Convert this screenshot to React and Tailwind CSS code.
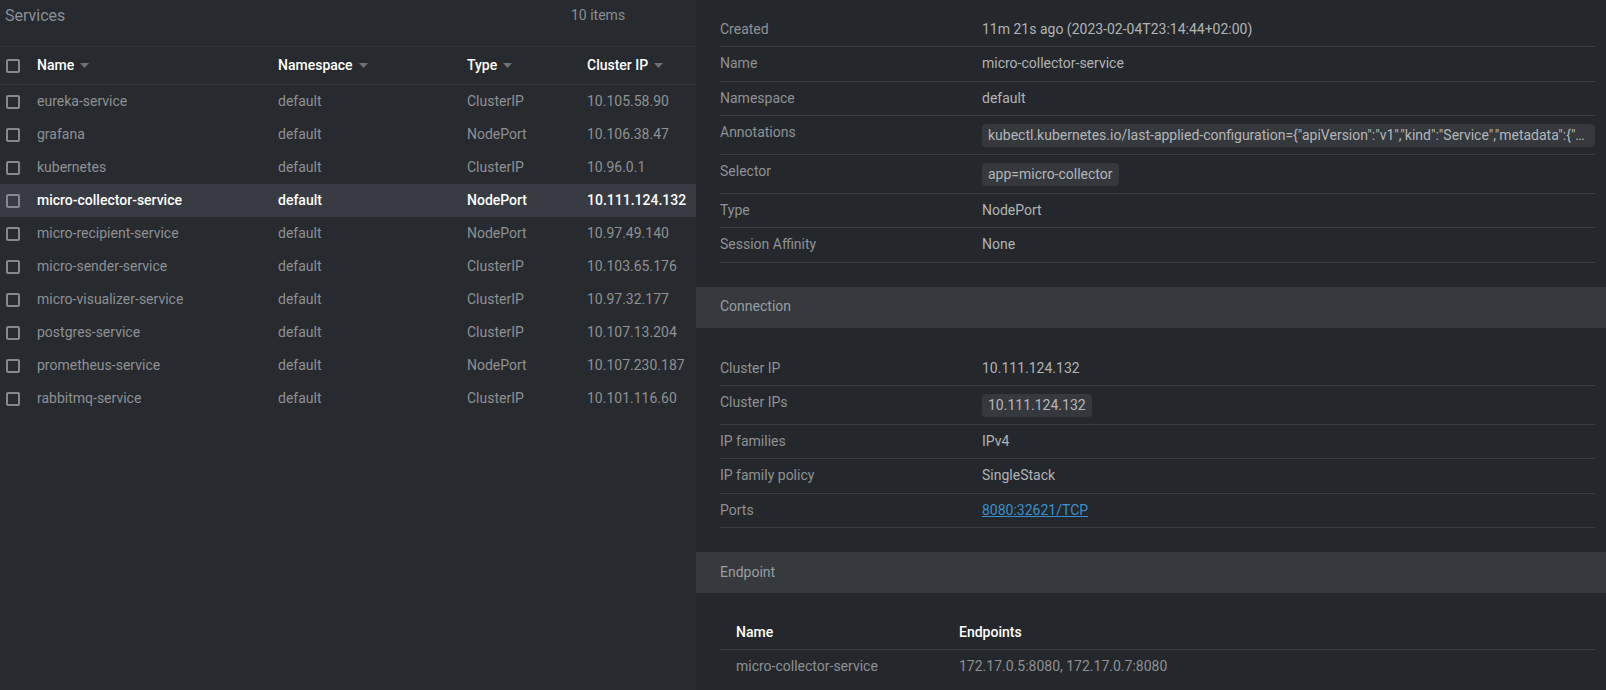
import React from "react";

const services = [
  { name: "eureka-service", ns: "default", type: "ClusterIP", ip: "10.105.58.90" },
  { name: "grafana", ns: "default", type: "NodePort", ip: "10.106.38.47" },
  { name: "kubernetes", ns: "default", type: "ClusterIP", ip: "10.96.0.1" },
  { name: "micro-collector-service", ns: "default", type: "NodePort", ip: "10.111.124.132", selected: true },
  { name: "micro-recipient-service", ns: "default", type: "NodePort", ip: "10.97.49.140" },
  { name: "micro-sender-service", ns: "default", type: "ClusterIP", ip: "10.103.65.176" },
  { name: "micro-visualizer-service", ns: "default", type: "ClusterIP", ip: "10.97.32.177" },
  { name: "postgres-service", ns: "default", type: "ClusterIP", ip: "10.107.13.204" },
  { name: "prometheus-service", ns: "default", type: "NodePort", ip: "10.107.230.187" },
  { name: "rabbitmq-service", ns: "default", type: "ClusterIP", ip: "10.101.116.60" },
];

const cols = "grid grid-cols-[37px_241px_189px_120px_109px] items-center";

function Checkbox() {
  return <span className="block w-[14px] h-[14px] ml-[6px] border-2 border-[#85888c] rounded-[2px]" />;
}

function SortArrow() {
  return (
    <svg width="9" height="5" viewBox="0 0 9 5" className="ml-[6px] mt-[1px]">
      <path d="M0 0 L9 0 L4.5 5 Z" fill="#6c7075" />
    </svg>
  );
}

function HeadCell({ children }) {
  return (
    <div className="flex items-center text-white font-medium">
      {children}
      <SortArrow />
    </div>
  );
}

function DetailRow({ label, children, badge }) {
  return (
    <div
      className={`grid grid-cols-[262px_1fr] border-b border-[#393c41] ${
        badge ? "pt-[8px] pb-[7px]" : "py-[8px]"
      }`}
    >
      <div className="text-[#8f9296]">{label}</div>
      <div className="text-[#b1b4b7] min-w-0 flex items-start">{children}</div>
    </div>
  );
}

function Badge({ children, full }) {
  return (
    <span
      className={`${full ? "flex-1 min-w-0" : ""} block h-[23px] leading-[17px] bg-[#35383d] rounded-[4px] px-[6px] py-[3px] text-[#b4b7ba] truncate`}
    >
      {children}
    </span>
  );
}

function SectionHeader({ children }) {
  return (
    <div className="h-[41px] bg-[#36393e] flex items-center px-[24px] text-[#9a9da1]">{children}</div>
  );
}

export default function App() {
  return (
    <div
      className="flex w-[1606px] h-[690px] overflow-hidden text-[14px] leading-[17.33px]"
      style={{ fontFamily: "Roboto, 'Liberation Sans', sans-serif" }}
    >
      {/* services list */}
      <div className="w-[696px] shrink-0 bg-[#272a2e]">
        <div className="h-[47px] border-b border-[#313439] flex items-start pt-[6px]">
          <div className="w-[571px] pl-[5px] text-[16px] leading-[19px] text-[#8a9099]">Services</div>
          <div className="text-[#8a9099] text-[14px] leading-[19px]">10 items</div>
        </div>
        <div className={`${cols} h-[38px] border-b border-[#35383c]`}>
          <Checkbox />
          <HeadCell>Name</HeadCell>
          <HeadCell>Namespace</HeadCell>
          <HeadCell>Type</HeadCell>
          <HeadCell>Cluster IP</HeadCell>
        </div>
        {services.map((s) => (
          <div
            key={s.name}
            className={`${cols} h-[33px] ${
              s.selected ? "bg-[#383b41] text-white font-medium" : "text-[#8e9195]"
            }`}
          >
            <Checkbox />
            <div>{s.name}</div>
            <div>{s.ns}</div>
            <div>{s.type}</div>
            <div>{s.ip}</div>
          </div>
        ))}
      </div>

      {/* details */}
      <div className="flex-1 bg-[#24272b] pt-[13px]">
        <div className="pl-[24px] pr-[11px]">
          <DetailRow label="Created">11m 21s ago (2023-02-04T23:14:44+02:00)</DetailRow>
          <DetailRow label="Name">micro-collector-service</DetailRow>
          <DetailRow label="Namespace">default</DetailRow>
          <DetailRow label="Annotations" badge>
            <Badge full>
              kubectl.kubernetes.io/last-applied-configuration={"{"}"apiVersion":"v1","kind":"Service","metadata":{"{"}"annotations":{"{}"},"labels":{"{"}"app":"micro-collector"{"}"}
            </Badge>
          </DetailRow>
          <DetailRow label="Selector" badge>
            <Badge>app=micro-collector</Badge>
          </DetailRow>
          <DetailRow label="Type">NodePort</DetailRow>
          <DetailRow label="Session Affinity">None</DetailRow>
        </div>

        <div className="mt-[24px]">
          <SectionHeader>Connection</SectionHeader>
        </div>
        <div className="pl-[24px] pr-[11px] pt-[24px]">
          <DetailRow label="Cluster IP">10.111.124.132</DetailRow>
          <DetailRow label="Cluster IPs" badge>
            <Badge>10.111.124.132</Badge>
          </DetailRow>
          <DetailRow label="IP families">IPv4</DetailRow>
          <DetailRow label="IP family policy">SingleStack</DetailRow>
          <DetailRow label="Ports">
            <a href="#" className="text-[#3d90ce] underline">
              8080:32621/TCP
            </a>
          </DetailRow>
        </div>

        <div className="mt-[24px]">
          <SectionHeader>Endpoint</SectionHeader>
        </div>
        <div className="pl-[24px] pr-[11px] pt-[24px]">
          <div className="grid grid-cols-[223px_1fr] h-[33px] items-center pl-[16px] border-b border-[#393c41] text-white font-medium">
            <div>Name</div>
            <div>Endpoints</div>
          </div>
          <div className="grid grid-cols-[223px_1fr] h-[34px] items-center pl-[16px] text-[#8e9195]">
            <div>micro-collector-service</div>
            <div>172.17.0.5:8080, 172.17.0.7:8080</div>
          </div>
        </div>
      </div>
    </div>
  );
}
